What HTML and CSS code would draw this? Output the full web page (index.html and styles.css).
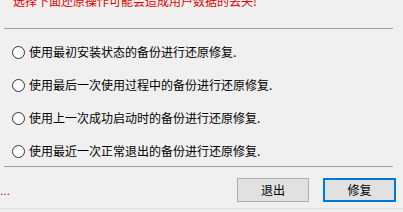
FILE: index.html
```html
<!DOCTYPE html>
<html>
<head>
<meta charset="utf-8">
<link rel="stylesheet" href="styles.css">
</head>
<body>
<div class="dialog">
  <div class="warning">选择下面还原操作可能会造成用户数据的丢失!</div>
  <div class="sep sep-top"></div>
  <div class="options">
    <label class="opt"><span class="radio"></span><span class="label">使用最初安装状态的备份进行还原修复.</span></label>
    <label class="opt"><span class="radio"></span><span class="label">使用最后一次使用过程中的备份进行还原修复.</span></label>
    <label class="opt"><span class="radio"></span><span class="label">使用上一次成功启动时的备份进行还原修复.</span></label>
    <label class="opt"><span class="radio"></span><span class="label">使用最近一次正常退出的备份进行还原修复.</span></label>
  </div>
  <div class="sep sep-bottom"></div>
  <div class="footer">
    <span class="status">...</span>
    <div class="buttons">
      <button class="btn">退出</button>
      <button class="btn btn-default">修复</button>
    </div>
  </div>
  <div class="edge"></div>
</div>
</body>
</html>
```
FILE: styles.css
```css
html, body {
  margin: 0;
  padding: 0;
  background: #f0f0f0;
  overflow: hidden;
}
.dialog {
  width: 403px;
  height: 212px;
  display: flex;
  flex-direction: column;
  font-family: "Noto Sans CJK SC", "Liberation Sans", sans-serif;
  font-size: 12px;
  color: #000;
}
.dialog > * {
  flex: none;
}
.warning {
  margin: -5px 0 0 13px;
  height: 12px;
  line-height: 12px;
  color: #e00000;
  white-space: nowrap;
}
.sep {
  height: 1px;
  background: #a0a0a0;
  margin-left: 4px;
  width: 389px;
}
.sep-top {
  margin-top: 21px;
}
.options {
  display: flex;
  flex-direction: column;
  gap: 17px;
  margin-top: 15px;
  padding-left: 12px;
}
.opt {
  display: flex;
  align-items: center;
  height: 16px;
  line-height: 16px;
}
.radio {
  box-sizing: border-box;
  width: 13px;
  height: 13px;
  border: 1px solid #333;
  border-radius: 50%;
  background: #fff;
  flex: none;
}
.label {
  margin-left: 4px;
  white-space: nowrap;
}
.sep-bottom {
  margin-top: 7px;
}
.footer {
  display: flex;
  align-items: center;
  justify-content: space-between;
  margin-top: 11px;
  height: 24px;
}
.status {
  font-family: "Liberation Sans", sans-serif;
  color: #b0103a;
  font-size: 12px;
  line-height: 12px;
  margin-top: 2px;
}
.buttons {
  display: flex;
  gap: 14px;
  margin-right: 7px;
}
.btn {
  box-sizing: border-box;
  width: 72px;
  height: 24px;
  padding: 0;
  background: #e1e1e1;
  border: 1px solid #adadad;
  border-radius: 0;
  font-family: "Noto Sans CJK SC", sans-serif;
  font-size: 12px;
  color: #000;
  line-height: 20px;
}
.btn-default {
  width: 73px;
  border: 2px solid #0078d7;
}
.edge {
  margin-top: 6px;
  height: 1px;
  background: #e3e3e3;
}
```
